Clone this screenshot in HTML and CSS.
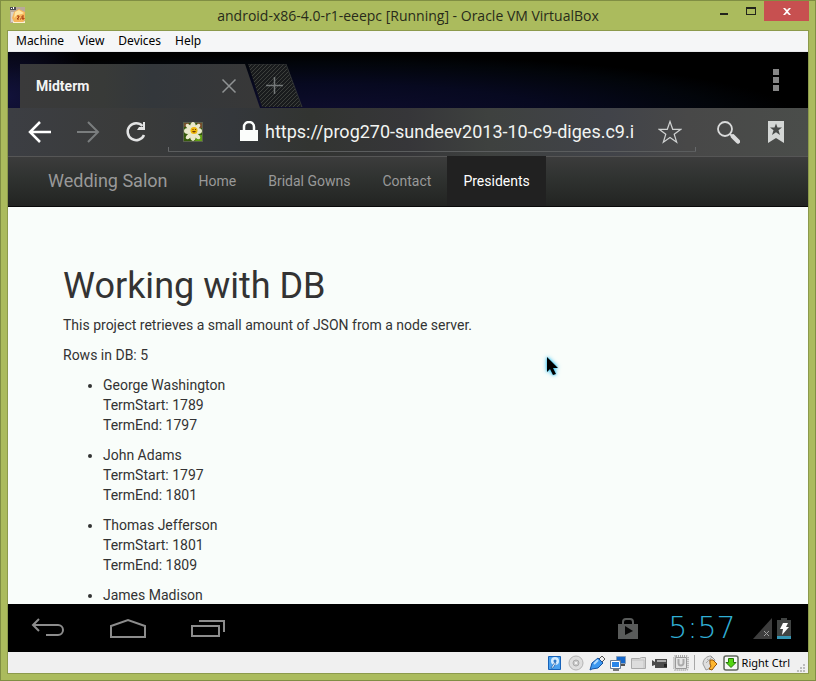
FILE: index.html
```html
<!DOCTYPE html>
<html lang="en">
<head>
<meta charset="utf-8">
<title>android-x86-4.0-r1-eeepc [Running] - Oracle VM VirtualBox</title>
<link rel="stylesheet" href="styles.css">
</head>
<body>
<div class="window">
  <header class="titlebar">
    <svg class="app-icon" viewBox="0 0 16 16" aria-hidden="true">
      <path d="M0 0h15v16H0z" fill="#b9a99a"/><path d="M0 0h6v3H0z" fill="#4b4c50"/><path d="M1 1h1v1H1zM3 0h1v2H3z" fill="#fff"/>
      <path d="M1 5h4v10H1z" fill="#d9d2c8"/>
      <path d="M4 5l5-3 6 3v8l-2 2H4l-2-4z" fill="#f6b65c"/><path d="M5 5l4-2 5 3-2 1-5 1-3 3z" fill="#ffe6a2"/>
      <path d="M7 9h2v1L7 12h2M10 12h1M14 9h-2v3h2v-1h-2" fill="none" stroke="#a93c12"/><path d="M3 14l1 1h9l2-1v2H3z" fill="#fff2d5"/>
    </svg>
    <h1 class="window-title">android-x86-4.0-r1-eeepc [Running] - Oracle VM VirtualBox</h1>
    <div class="window-controls">
      <button class="win-btn minimize" aria-label="Minimize"><svg width="8" height="2"><path d="M0 0h8v2H0z" fill="#22241c"/></svg></button>
      <button class="win-btn" aria-label="Maximize"><svg width="10" height="8"><path d="M0 0h10v8H0zM1 2v5h8V2z" fill="#22241c" fill-rule="evenodd"/></svg></button>
      <button class="win-btn close" aria-label="Close"><svg width="8" height="7"><path d="M0 0h2l2 2 2-2h2L5 3.500 8 7H6L4 5 2 7H0l3-3.500z" fill="#fff"/></svg></button>
    </div>
  </header>
  <div class="client">
    <nav class="menubar" aria-label="Virtual machine menu">
      <button>Machine</button><button>View</button><button>Devices</button><button>Help</button>
    </nav>
    <div class="tabstrip">
      <div class="tab">
        <span>Midterm</span>
        <button class="tab-close" aria-label="Close tab"><svg width="16" height="16"><path d="M1.500 1.500l13 13M14.500 1.500l-13 13" stroke="#909394" stroke-width="1.500"/></svg></button>
      </div>
      <button class="new-tab" aria-label="New tab">
        <svg width="56" height="43">
          <defs><pattern id="hatch" width="4" height="4" patternUnits="userSpaceOnUse"><path d="M0 0h4v4H0z" fill="#191b1d"/><path d="M-1 1l2-2M0 4l4-4M3 5l2-2" stroke="#3d403d"/></pattern></defs>
          <path d="M0 0h38l16 43H14z" fill="url(#hatch)"/><path d="M0 0h38l16 43" fill="none" stroke="#303334"/>
          <path d="M18 21.500h17M26.500 13v17" stroke="#75797a" stroke-width="1.500"/>
        </svg>
      </button>
      <button class="overflow" aria-label="More options"><svg width="6" height="22"><path d="M0 0h6v6H0zM0 8h6v6H0zM0 16h6v6H0z" fill="#868686"/></svg></button>
    </div>
    <div class="toolbar">
      <button class="tool" aria-label="Back"><svg width="24" height="24"><path d="M23 12H2M12 2L2 12l10 10" fill="none" stroke="#fff" stroke-width="2.500"/></svg></button>
      <button class="tool" aria-label="Forward"><svg width="24" height="24"><path d="M1 12h21M12 2l10 10-10 10" fill="none" stroke="#7a7d7e" stroke-width="2"/></svg></button>
      <button class="tool" aria-label="Reload"><svg width="24" height="24"><path d="M18.500 6A8.500 8.500 0 1 0 20 15" fill="none" stroke="#e3e4e4" stroke-width="2.500"/><path d="M21 2v8h-8l2-3h4V2z" fill="#e3e4e4"/></svg></button>
      <div class="address">
        <svg class="favicon" width="20" height="20" aria-hidden="true">
          <path d="M0 0h20v20H0z" fill="#59604d"/><path d="M1 1h18v18H1z" fill="#35590b"/><path d="M1 1h5v4H1zM14 1h5v5h-5z" fill="#76502c"/><path d="M14 13h5v6h-7z" fill="#639f14"/>
          <g fill="#e9e8cb"><ellipse cx="10" cy="5" rx="3" ry="5"/><ellipse cx="10" cy="14" rx="3" ry="5"/><ellipse cx="5" cy="9" rx="4" ry="3"/><ellipse cx="15" cy="9" rx="4" ry="3"/><ellipse cx="6" cy="5" rx="2" ry="4" transform="rotate(-45 6 5)"/><ellipse cx="14" cy="5" rx="2" ry="4" transform="rotate(45 14 5)"/><ellipse cx="6" cy="14" rx="2" ry="4" transform="rotate(45 6 14)"/><ellipse cx="14" cy="14" rx="2" ry="4" transform="rotate(-45 14 14)"/></g>
          <circle cx="11" cy="8.500" r="3.500" fill="#efb90c"/><path d="M9.500 7h1v1h-1zM12 7h1v1h-1zM9 9q2 3 4 0" fill="#743d05"/>
        </svg>
        <svg class="lock" width="18" height="21" aria-hidden="true"><path d="M0 9h18v11H0z" fill="#fbfdfb"/><path d="M4 10V6a5 5 0 0 1 10 0v4" fill="none" stroke="#fbfdfb" stroke-width="2.500"/></svg>
        <input class="url" type="text" aria-label="Web address" value="https://prog270-sundeev2013-10-c9-diges.c9.i">
        <button class="star" aria-label="Bookmark this page"><svg width="24" height="24"><path d="M12 1.500l2.700 7.800h8.100l-6.600 4.900 2.500 8L12 17.500l-6.700 4.700 2.500-8L1.200 9.300h8.100z" fill="none" stroke="#cfd1d1" stroke-width="1.200"/></svg></button>
      </div>
      <button class="tool" aria-label="Search"><svg width="24" height="24"><circle cx="9" cy="9" r="7" fill="none" stroke="#dadbdb" stroke-width="1.800"/><path d="M14 14l3 3" stroke="#dadbdb" stroke-width="2"/><path d="M17 16.500l5 5" stroke="#dadbdb" stroke-width="4.500" stroke-linecap="round"/></svg></button>
      <button class="tool" aria-label="Bookmarks"><svg width="18" height="24"><path d="M1 1h16v22l-8-5-8 5z" fill="#d4d7d5"/><path d="M9 3.500l1.500 4H15l-3.500 2.800L13 15l-4-2.800L5 15l1.500-4.700L3 7.500h4.500z" fill="#474a48"/></svg></button>
    </div>
    <nav class="site-nav" aria-label="Site">
      <a class="brand" href="#">Wedding Salon</a>
      <a href="#">Home</a><a href="#">Bridal Gowns</a><a href="#">Contact</a><a class="active" href="#">Presidents</a>
    </nav>
    <main class="page">
      <h2>Working with DB</h2>
      <p>This project retrieves a small amount of JSON from a node server.</p>
      <p>Rows in DB: 5</p>
      <ul>
        <li>George Washington<br>TermStart: 1789<br>TermEnd: 1797</li>
        <li>John Adams<br>TermStart: 1797<br>TermEnd: 1801</li>
        <li>Thomas Jefferson<br>TermStart: 1801<br>TermEnd: 1809</li>
        <li>James Madison</li>
      </ul>
      <svg class="pointer" width="22" height="26" aria-hidden="true"><path d="M4 3v15l3-3 3 6 3-1-3-6h5z" fill="#000"/></svg>
    </main>
    <div class="systembar">
      <button class="sys" aria-label="Back"><svg width="34" height="20"><path d="M8 1L2 7l6 6M2 7h25a5 5 0 0 1 0 10H15" fill="none" stroke="#8c8c8c" stroke-width="2"/></svg></button>
      <button class="sys" aria-label="Home"><svg width="38" height="20"><path d="M2 19V8l17-6 17 6v11z" fill="none" stroke="#8c8c8c" stroke-width="2"/></svg></button>
      <button class="sys" aria-label="Recent apps"><svg width="36" height="18"><path d="M2 7h27v10H2zM9 2h25v11" fill="none" stroke="#8c8c8c" stroke-width="2"/></svg></button>
      <div class="tray">
        <svg width="20" height="21" aria-hidden="true"><path d="M0 6h20v15H0z" fill="#595b5a"/><path d="M5 6V4a3 3 0 0 1 3-3h4a3 3 0 0 1 3 3v2" fill="none" stroke="#595b5a" stroke-width="2"/><path d="M7 8l8 5-8 4z" fill="#050505"/></svg>
        <time>5:57</time>
        <div class="signals">
          <svg width="19" height="21" aria-hidden="true"><path d="M19 0v21H0z" fill="#3d3d3d"/><path d="M11 13l5 5M16 13l-5 5" stroke="#a0a0a0"/></svg>
          <svg width="14" height="21" aria-hidden="true"><path d="M4 0h6v2h4v19H0V2h4z" fill="#414443"/><path d="M0 18h14v3H0z" fill="#3596b4"/><path d="M6 5h5L9 9h3l-7 8 1-6H3z" fill="#fff"/></svg>
        </div>
      </div>
    </div>
    <footer class="statusbar">
      <svg viewBox="0 0 16 16"><path d="M1.500 1.500h12v13h-12z" fill="#4ba1ee" stroke="#1762b8"/><circle cx="8" cy="6" r="4" fill="#d5ecff"/><path d="M4 13l4-6 1 1-3 5z" fill="#fff" stroke="#1b5ca6" stroke-width=".7"/><circle cx="8" cy="6" r="1.500" fill="#2c78c7"/></svg>
      <svg viewBox="0 0 16 16"><circle cx="8" cy="8" r="7" fill="#dedede" stroke="#b4b4b4"/><circle cx="8" cy="8" r="3" fill="#ccc" stroke="#a9a9a9"/><circle cx="8" cy="8" r="1" fill="#fff"/></svg>
      <svg viewBox="0 0 16 16"><path d="M10 4l3-3 3 3-3 3z" fill="#eee" stroke="#555"/><path d="M1 15l2-7 6-5 5 5-5 5-6 1z" fill="#3c98f0" stroke="#1452a2"/><path d="M5 9l4-4" stroke="#b3ddff" stroke-width="2"/></svg>
      <svg viewBox="0 0 16 16"><path d="M6.500 1.500h9v7h-9z" fill="#1769cc" stroke="#88a0bc"/><path d="M11 10h4" stroke="#555" stroke-width="2"/><path d="M1.500 6.500h8v6h-8z" fill="#2986e9" stroke="#fff"/><path d="M.5 5.500h10v8H.5z" fill="none" stroke="#697c94"/><path d="M3 15h6" stroke="#777" stroke-width="2"/></svg>
      <svg viewBox="0 0 16 16"><path d="M.5 13.500v-10h8l2-1h4v11z" fill="#ddd" stroke="#aaa"/><path d="M1 5h12v8" fill="none" stroke="#c2c2c2"/></svg>
      <svg viewBox="0 0 16 16"><path d="M0 5l3 2V4h12v9H3v-3l-3 1z" fill="#4b4b4b"/><path d="M5 6h9" stroke="#aaa" stroke-width="2"/><path d="M12 9h3v3h-3z" fill="#222"/></svg>
      <svg viewBox="0 0 16 16"><rect x="1" y="1" width="14" height="14" rx="2" fill="none" stroke="#aaa" stroke-width="2" stroke-dasharray="1 1"/><path d="M2.500 2.500h11v11h-11z" fill="#e4e4e4" stroke="#999"/><path d="M5.500 4v4a2.500 2.500 0 0 0 5 0V4" fill="none" stroke="#aaa" stroke-width="2"/></svg>
      <span class="divider"></span>
      <svg viewBox="0 0 16 16"><path d="M1 9c0-5 4-8 8-8l4 4-4 8-5 2z" fill="#dedede" stroke="#9b9b9b"/><path d="M4 8l6-6M5 4l5 4" stroke="#aaa"/><path d="M8 5l3 0 4 4-2 2-3 4-3-1 2-3-1-2z" fill="#ffb62e" stroke="#9a5606"/></svg>
      <svg viewBox="0 0 16 16"><rect x="1" y="1" width="14" height="14" rx="2" fill="#f7f7f7" stroke="#60675e" stroke-width="1.500"/><path d="M5.500 3.500h5v4H13l-5 5-5-5h2.500z" fill="#54d612" stroke="#26780b"/></svg>
      <span class="host-key">Right Ctrl</span>
      <svg class="grip" viewBox="0 0 9 9"><path d="M6 0h2v2H6zM3 3h2v2H3zM6 3h2v2H6zM0 6h2v2H0zM3 6h2v2H3zM6 6h2v2H6z" fill="#bcbcbc"/></svg>
    </footer>
  </div>
</div>
</body>
</html>
```
FILE: styles.css
```css
* { box-sizing: border-box; }
body { margin: 0; font-family: Roboto, sans-serif; }
button { border: 0; padding: 0; background: none; font: inherit; color: inherit; display: flex; align-items: center; justify-content: center; }
svg { display: block; flex: none; }

.window { height: 100vh; display: flex; flex-direction: column; background: #abbb5d; border: 1px solid #808e43; padding: 0 6px 6px; }
.titlebar { flex: none; height: 29px; display: grid; grid-template-columns: 1fr auto 1fr; }
.app-icon { width: 16px; height: 16px; margin: 6px 0 0 3px; }
.window-title { margin: 0; font: 14px/30px "Open Sans", sans-serif; color: #282b1a; white-space: nowrap; }
.window-controls { display: flex; justify-content: flex-end; align-items: flex-start; }
.win-btn { width: 27px; height: 20px; }
.win-btn.minimize { padding-top: 6px; }
.win-btn.close { width: 45px; background: #c75050; }

.client { flex: 1; min-height: 0; display: flex; flex-direction: column; border: 1px solid #8c9a4c; }
.menubar { flex: none; height: 21px; display: flex; gap: 14px; padding: 0 8px; background: #f5f6f7; border-bottom: 1px solid #e8e9eb; font: 12px/20px "Noto Sans", sans-serif; color: #000; }

.tabstrip { flex: none; height: 56px; display: flex; align-items: flex-end; padding-left: 12px; background: radial-gradient(ellipse 90px 70px at 0 80%, #12123a, transparent), radial-gradient(ellipse 480px 60px at 38% 110%, #0e0d2e 0, #070920 50%, #02050a 85%, transparent 100%), #000; }
.tab { width: 240px; height: 44px; display: flex; align-items: center; justify-content: space-between; padding: 0 24px 0 16px; background: linear-gradient(90deg, #3a3a3b, #383a38 35%, #33373b 55%, #383838); clip-path: polygon(0 0, 225px 0, 100% 100%, 0 100%); color: #f3f3f3; font-size: 14px; font-weight: 700; }
.tab-close { margin-right: -1px; }
.new-tab { margin-left: -12px; height: 44px; align-items: flex-start; }
.overflow { width: 48px; height: 56px; margin-left: auto; margin-right: 8px; }

.toolbar { flex: none; height: 48px; display: flex; padding: 0 8px; background: linear-gradient(90deg, #3c3e43, #3a3b3a 15%, #34373b 28%, #323431 38%, #363639 50%, #3e413f 60%, #414349 75%, #484848 85%, #4a4d4a); }
.tool { width: 48px; flex: none; }
.address { flex: 1; min-width: 0; height: 44px; margin: 0 8px; display: flex; align-items: center; padding: 4px 14px 0 15px; border-bottom: 1px solid #5b5d5e; background: linear-gradient(#66686a, #66686a) left bottom / 1px 4px no-repeat, linear-gradient(#66686a, #66686a) right bottom / 1px 4px no-repeat; }
.lock { margin-left: 37px; }
.url { flex: 1; min-width: 0; margin: 0 14px 0 7px; border: 0; padding: 0; background: none; color: #f2f4f2; font: 18px/24px Roboto, sans-serif; }

.site-nav { flex: none; height: 51px; display: flex; padding: 0 25px; background: linear-gradient(#3c3c3c, #303331 40%, #222422); border-top: 1px solid #565656; border-bottom: 1px solid #090909; font-size: 14px; line-height: 48px; }
.site-nav a { padding: 0 16px; color: #999; text-decoration: none; white-space: nowrap; }
.site-nav .brand { padding: 0 15px; font-size: 18px; }
.site-nav .active { margin-top: -1px; padding-top: 1px; background: #212121; color: #fff; }

.page { flex: 1; min-height: 0; overflow: hidden; position: relative; padding: 58px 55px 0; background: #f9fdfa; color: #333; font-size: 14px; line-height: 20px; }
.page h2 { margin: 0 0 8px; font-size: 36px; line-height: 42px; font-weight: 400; }
.page p { margin: 0 0 10px; }
.page ul { margin: 0; padding-left: 40px; }
.page li { margin-bottom: 10px; }
.pointer { position: absolute; left: 535px; top: 147px; filter: drop-shadow(0 0 1px #35c5f5) drop-shadow(0 0 2px #55c8ee); }

.systembar { flex: none; height: 48px; display: flex; background: #000; }
.sys { width: 80px; }
.tray { margin-left: auto; display: flex; align-items: center; padding-right: 17px; }
.tray time { min-width: 80px; margin: 0 11px 0 24px; text-align: center; font: 200 30px/48px "DejaVu Sans Light", "DejaVu Sans", sans-serif; color: #30afd5; }
.signals { display: flex; gap: 5px; }

.statusbar { flex: none; height: 21px; display: flex; align-items: center; justify-content: flex-end; gap: 5px; padding-right: 2px; background: #f0f0f0; font: 11px/20px "Noto Sans", sans-serif; color: #000; }
.statusbar svg { width: 16px; height: 16px; }
.divider { width: 1px; height: 15px; margin-right: 2px; background: #a8a8a8; }
.host-key { margin-left: -2px; white-space: nowrap; }
.statusbar .grip { width: 9px; height: 9px; margin-left: 2px; align-self: flex-end; }
```
